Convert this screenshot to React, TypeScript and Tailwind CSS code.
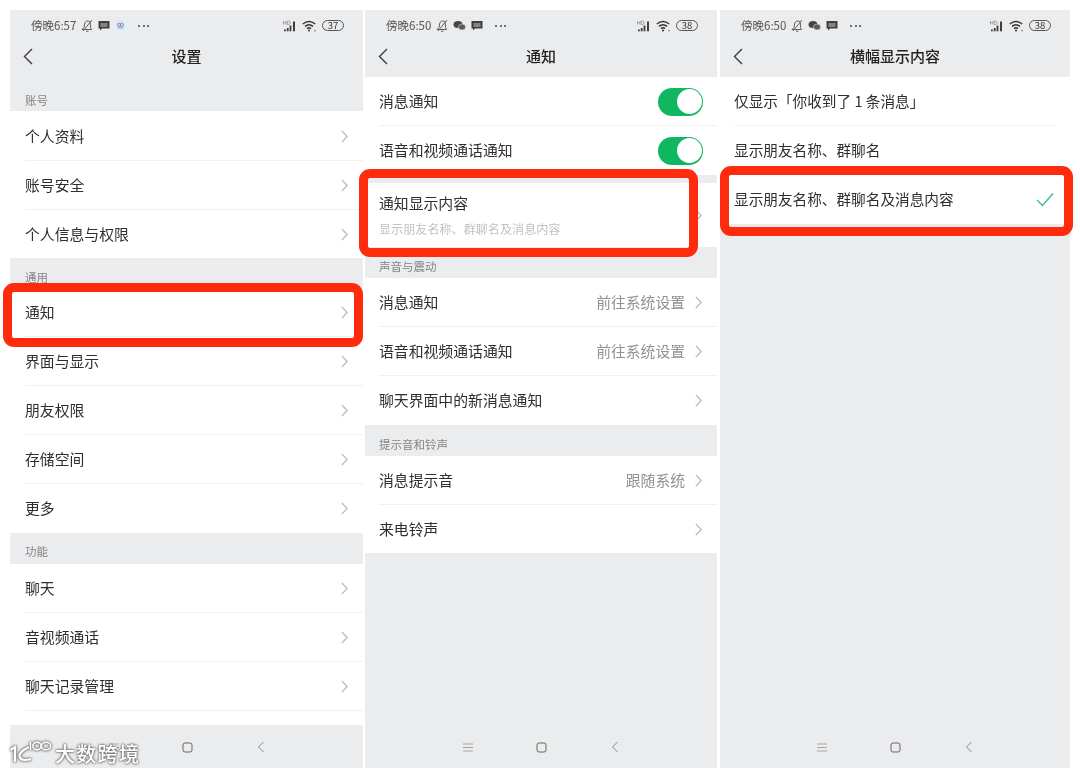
import React from "react";

const font = { fontFamily: '"Noto Sans CJK SC", "Noto Sans", sans-serif' };

function Chevron({ className = "" }: { className?: string }) {
  return (
    <svg width="7" height="13" viewBox="0 0 7 13" fill="none" className={className}>
      <path d="M0.8 0.8 L6.2 6.5 L0.8 12.2" stroke="#b5b5b5" strokeWidth="1.2" />
    </svg>
  );
}

function Bell() {
  return (
    <svg width="12" height="13" viewBox="0 0 12 13" fill="none" stroke="#5f5f5f" strokeWidth="1">
      <path d="M1 10.5 H10.5 L9.6 8.5 L9.2 3 Q7.5 1.5 5.5 2.2 Q3.8 3 3.6 5 L3 8.5 Z" />
      <path d="M5 12.2 H7.5" />
      <path d="M2 12 L11 1" />
    </svg>
  );
}

function Msg() {
  return (
    <svg width="12" height="11" viewBox="0 0 12 11">
      <path d="M0.5 1 H11.5 V8.5 H4 L2 10.5 V8.5 H0.5 Z" fill="#3f3f3f" />
      <path d="M2.5 4 H9.5 M2.5 6 H9.5" stroke="#ebecee" strokeWidth="0.8" />
    </svg>
  );
}

function Wechat() {
  return (
    <svg width="13" height="11" viewBox="0 0 13 11">
      <ellipse cx="5" cy="4.5" rx="4.5" ry="3.6" fill="#444" />
      <ellipse cx="9" cy="7" rx="3.6" ry="3" fill="#5c5c5c" stroke="#ebecee" strokeWidth="0.5" />
    </svg>
  );
}

function AppDot() {
  return (
    <svg width="11" height="11" viewBox="0 0 11 11">
      <circle cx="5.5" cy="5.5" r="5" fill="#d8e4f4" />
      <circle cx="4.2" cy="5" r="1.6" fill="none" stroke="#d04f8c" strokeWidth="0.8" />
      <circle cx="6.8" cy="5" r="1.6" fill="none" stroke="#4f90d0" strokeWidth="0.8" />
      <path d="M3 7.8 H8" stroke="#63b0d8" strokeWidth="0.9" />
    </svg>
  );
}

function Signal() {
  return (
    <svg width="14" height="12" viewBox="0 0 14 12" fill="#3f3f3f">
      <rect x="1" y="9.5" width="1.8" height="1.8" />
      <rect x="3.8" y="8" width="1.8" height="3.3" />
      <rect x="6.6" y="5.5" width="1.8" height="5.8" />
      <rect x="10" y="1.5" width="2" height="9.8" />
      <path d="M0.5 1 V4.5 M3 1 V4.5 M0.5 2.7 H3 M4.3 1 V4.5 H5.5 Q7.2 4.5 7.2 2.7 Q7.2 1 5.5 1 Z" stroke="#777" strokeWidth="0.6" fill="none" />
    </svg>
  );
}

function Wifi() {
  return (
    <svg width="15" height="12" viewBox="0 0 15 12" fill="none" stroke="#333" strokeWidth="1.4">
      <path d="M0.8 4 Q7 -1 13.2 4" />
      <path d="M3 6.4 Q7 3 11 6.4" />
      <path d="M5 8.6 Q7 7 9 8.6" />
      <circle cx="7" cy="10.6" r="1" fill="#333" stroke="none" />
      <circle cx="13" cy="10.6" r="0.9" fill="#888" stroke="none" />
    </svg>
  );
}

function Status({ time, icons, battery }: { time: string; icons: React.ReactNode; battery: string }) {
  return (
    <div className="flex h-[30px] items-center pl-[21px] pr-[19px] pt-[1px] text-[#555]">
      <span className="text-[11.5px] leading-none">{time}</span>
      <div className="ml-[5px] flex items-center gap-[5px]">{icons}</div>
      <span className="ml-[12px] flex gap-[2.5px]">
        <i className="h-[2px] w-[2px] rounded-full bg-[#444]" />
        <i className="h-[2px] w-[2px] rounded-full bg-[#444]" />
        <i className="h-[2px] w-[2px] rounded-full bg-[#444]" />
      </span>
      <div className="ml-auto flex items-center gap-[5px]">
        <Signal />
        <Wifi />
        <span className="flex h-[11px] w-[22px] items-center justify-center rounded-full border border-[#555] text-[9.5px] leading-none text-[#333]">
          {battery}
        </span>
      </div>
    </div>
  );
}

function Header({ title, time, icons, battery }: { title: string; time: string; icons: React.ReactNode; battery: string }) {
  return (
    <div className="h-[67px] shrink-0">
      <Status time={time} icons={icons} battery={battery} />
      <div className="relative flex h-[34px] items-center justify-center pb-[2px]">
        <svg width="10" height="17" viewBox="0 0 10 17" fill="none" className="absolute left-[13px] top-[8px]">
          <path d="M9 1 L1.5 8.5 L9 16" stroke="#3a3a3a" strokeWidth="1.4" />
        </svg>
        <span className="text-[15px] font-medium text-[#222]">{title}</span>
      </div>
    </div>
  );
}

function Label({ text, h, pb, pl = "pl-[15px]" }: { text: string; h: string; pb: string; pl?: string }) {
  return (
    <div className={`flex shrink-0 items-end text-[11.5px] leading-none text-[#858585] ${pl} ${h} ${pb}`}>
      {text}
    </div>
  );
}

function Row({
  text,
  value,
  last,
  right,
  pl = "pl-[15px]",
  sep = "left-[15px] right-0",
  size = "text-[14.85px]",
}: {
  text: string;
  value?: string;
  last?: boolean;
  right?: React.ReactNode;
  pl?: string;
  sep?: string;
  size?: string;
}) {
  return (
    <div className={`relative flex h-[49px] items-center pr-[15px] ${pl}`}>
      <span className={`leading-none text-[#2e2e2e] ${size}`}>{text}</span>
      <div className="ml-auto flex items-center gap-[10px]">
        {value && <span className="text-[14.8px] leading-none text-[#929292]">{value}</span>}
        {right ?? <Chevron />}
      </div>
      {!last && <div className={`absolute bottom-0 h-px bg-[#f1f1f1] ${sep}`} />}
    </div>
  );
}

function Toggle() {
  return (
    <div className="mr-[-1px] flex h-[28px] w-[45px] items-center justify-end rounded-full bg-[#0fb860] pr-[1px]">
      <div className="h-[25px] w-[25px] rounded-full bg-white" />
    </div>
  );
}

function NavBar({ dx }: { dx: string }) {
  return (
    <div className={`mt-auto flex h-[42px] shrink-0 items-center gap-[64px] bg-[#ebecee] ${dx}`}>
      <svg width="10" height="9" viewBox="0 0 10 9" stroke="#a5a5a5" strokeWidth="1" className="mr-[-1px]">
        <path d="M0 1 H10 M0 4.5 H10 M0 8 H10" />
      </svg>
      <svg width="11" height="11" viewBox="0 0 11 11" fill="none" stroke="#666" strokeWidth="1">
        <rect x="1" y="1" width="9" height="9" rx="2" />
      </svg>
      <svg width="8" height="12" viewBox="0 0 8 12" fill="none" stroke="#8a8a8a" strokeWidth="1">
        <path d="M6.5 1 L1.5 6 L6.5 11" />
      </svg>
    </div>
  );
}

function Phone({ w, children }: { w: string; children: React.ReactNode }) {
  return <div className={`flex h-[758px] shrink-0 flex-col overflow-hidden bg-[#ebecee] ${w}`}>{children}</div>;
}

function Watermark() {
  return (
    <div className="absolute left-[9px] top-[741px] flex items-start [filter:drop-shadow(0_0_1px_#666)_drop-shadow(0_0_1px_#888)]">
      <svg width="44" height="24" viewBox="0 0 44 24" fill="none" stroke="#fff" strokeWidth="2.2">
        <path d="M1.5 9 L6 6 V21" />
        <path d="M20 6 Q10 11 10.5 15 Q11.5 21 22 18" />
        <path d="M21.5 1 V9" strokeWidth="1.6" />
        <ellipse cx="28" cy="5" rx="4.2" ry="3.8" strokeWidth="1.6" />
        <ellipse cx="37" cy="5" rx="4.6" ry="3.8" strokeWidth="1.6" />
      </svg>
      <span className="ml-[2px] mt-[3px] text-[20px] font-medium leading-none tracking-[1.3px] text-white">大数跨境</span>
    </div>
  );
}

export default function App() {
  const wx = (
    <>
      <Bell />
      <Wechat />
      <Msg />
    </>
  );
  const p3 = "text-[14.65px]";
  return (
    <div style={font} className="relative h-[775px] w-[1080px] overflow-hidden bg-white blur-[0.4px]">
      <div className="flex pl-[10px] pt-[10px]">
        <Phone w="w-[353px]">
          <Header
            title="设置"
            time="傍晚6:57"
            icons={
              <>
                <Bell />
                <Msg />
                <AppDot />
              </>
            }
            battery="37"
          />
          <Label text="账号" h="h-[34px]" pb="pb-[5px]" />
          <div className="bg-white pt-[1px]">
            <Row text="个人资料" />
            <Row text="账号安全" />
            <div className="-mb-[1px]">
              <Row text="个人信息与权限" last />
            </div>
          </div>
          <Label text="通用" h="h-[30px]" pb="pb-[5px]" />
          <div className="bg-white">
            <Row text="通知" />
            <Row text="界面与显示" />
            <Row text="朋友权限" />
            <Row text="存储空间" />
            <Row text="更多" last />
          </div>
          <Label text="功能" h="h-[31px]" pb="pb-[7px]" />
          <div className="h-[161px] bg-white">
            <Row text="聊天" />
            <Row text="音视频通话" />
            <Row text="聊天记录管理" />
          </div>
          <NavBar dx="pl-[99px]" />
        </Phone>
        <div className="w-[2px] shrink-0" />
        <Phone w="w-[352px]">
          <Header title="通知" time="傍晚6:50" icons={wx} battery="38" />
          <div className="bg-white">
            <Row pl="pl-[14px]" sep="left-[14px] right-0" text="消息通知" right={<Toggle />} />
            <Row pl="pl-[14px]" text="语音和视频通话通知" right={<Toggle />} last />
          </div>
          <div className="mt-[8px] flex h-[64px] shrink-0 items-center justify-between bg-white pl-[14px] pr-[15px]">
            <div className="flex flex-col gap-[12px] pt-[1px]">
              <span className="text-[14.85px] leading-none text-[#2e2e2e]">通知显示内容</span>
              <span className="text-[12.1px] leading-none text-[#c2c2c2]">显示朋友名称、群聊名及消息内容</span>
            </div>
            <Chevron />
          </div>
          <Label pl="pl-[14px]" text="声音与震动" h="h-[31px]" pb="pb-[6px]" />
          <div className="bg-white">
            <Row pl="pl-[14px]" sep="left-[14px] right-0" text="消息通知" value="前往系统设置" />
            <Row pl="pl-[14px]" sep="left-[14px] right-0" text="语音和视频通话通知" value="前往系统设置" />
            <Row pl="pl-[14px]" text="聊天界面中的新消息通知" last />
          </div>
          <Label pl="pl-[14px]" text="提示音和铃声" h="h-[31px]" pb="pb-[6px]" />
          <div className="bg-white">
            <Row pl="pl-[14px]" sep="left-[14px] right-0" text="消息提示音" value="跟随系统" />
            <div className="-mb-[1px]">
              <Row pl="pl-[14px]" text="来电铃声" last />
            </div>
          </div>
          <NavBar dx="pl-[98px]" />
        </Phone>
        <div className="w-[3px] shrink-0" />
        <Phone w="w-[350px]">
          <Header title="横幅显示内容" time="傍晚6:50" icons={wx} battery="38" />
          <div className="bg-white">
            <Row size={p3} pl="pl-[14px]" sep="left-[14px] right-[14px]" text="仅显示「你收到了 1 条消息」" right={<span />} />
            <Row size={p3} pl="pl-[14px]" sep="left-[14px] right-[14px]" text="显示朋友名称、群聊名" right={<span />} />
            <Row
              size={p3}
              pl="pl-[14px]"
              text="显示朋友名称、群聊名及消息内容"
              last
              right={
                <svg width="18" height="15" viewBox="0 0 18 15" fill="none" className="mr-[1px]">
                  <path d="M1 8 L6.5 13.5 L17 1.5" stroke="#3cbb85" strokeWidth="1.3" />
                </svg>
              }
            />
          </div>
          <NavBar dx="pl-[97px]" />
        </Phone>
      </div>

      <div className="absolute left-[3px] top-[283px] h-[64px] w-[360px] rounded-[11px] border-[9px] border-[#fe2c0c]" />
      <div className="absolute left-[359px] top-[169px] h-[88px] w-[339px] rounded-[11px] border-[9px] border-[#fe2c0c]" />
      <div className="absolute left-[720px] top-[166px] h-[70px] w-[353px] rounded-[11px] border-[9px] border-[#fe2c0c]" />
      <Watermark />
    </div>
  );
}
